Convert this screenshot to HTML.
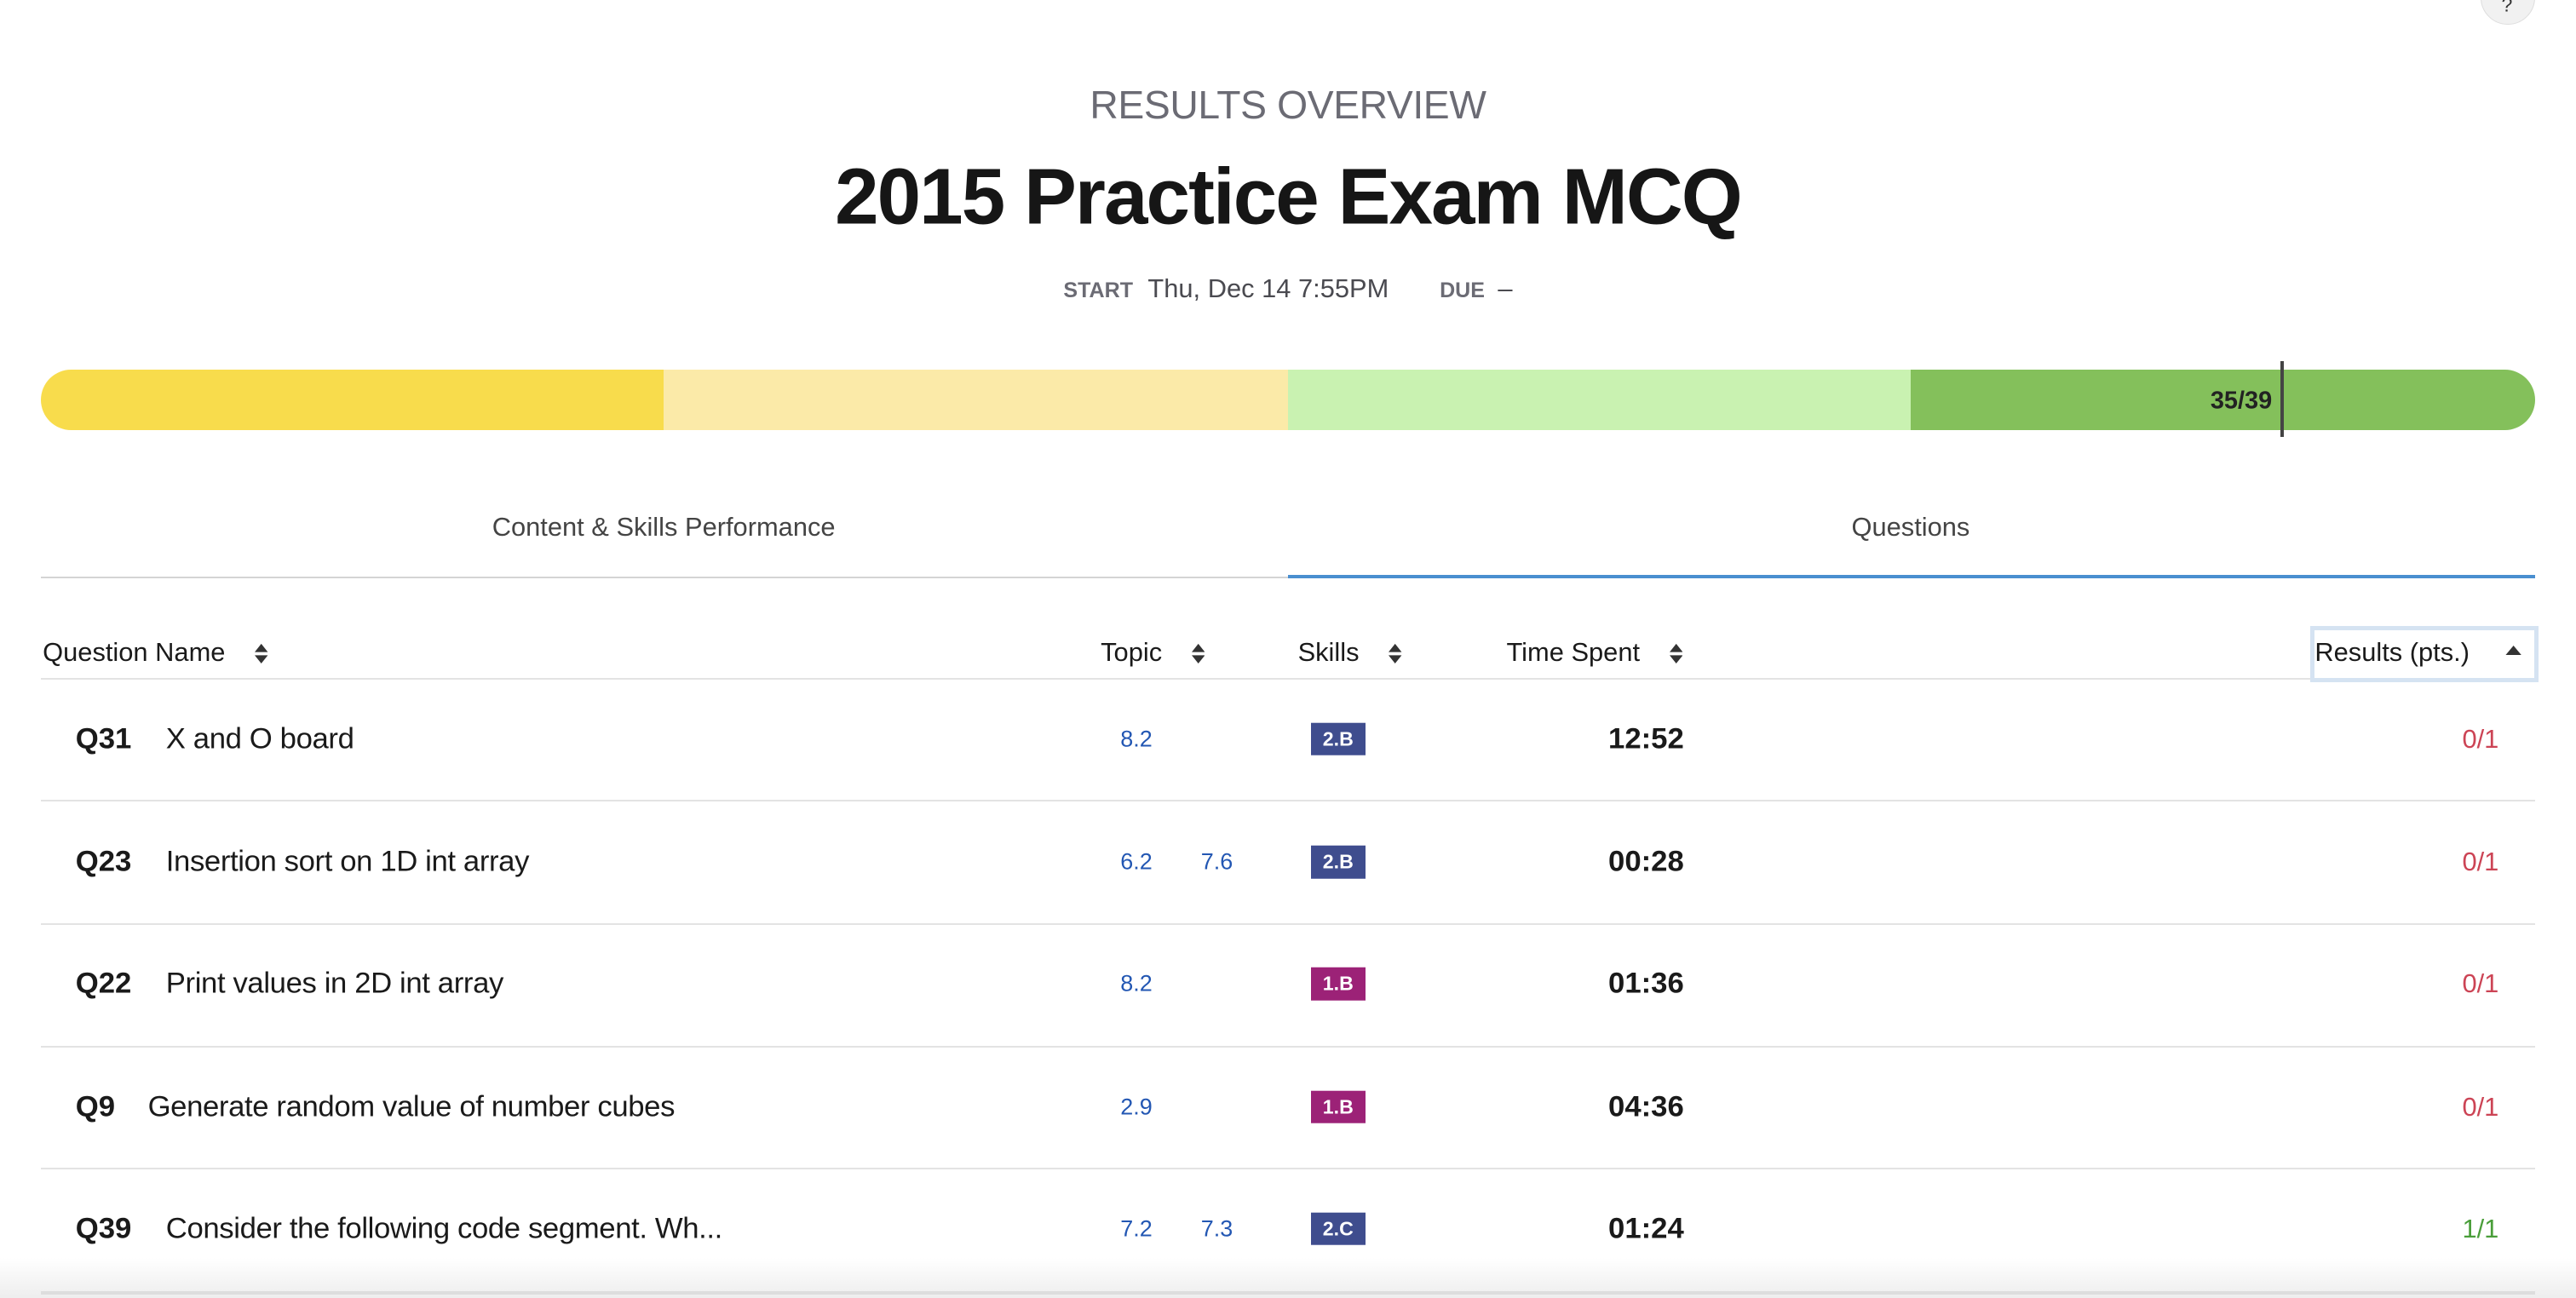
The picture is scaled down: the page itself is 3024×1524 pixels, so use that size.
<!DOCTYPE html>
<html><head><meta charset="utf-8"><style>
html,body{margin:0;padding:0;background:#fff;overflow:hidden}
#w{position:relative;width:1568px;height:790px;zoom:1.92857;font-family:"Liberation Sans",Arial,sans-serif;color:#1a1a1a}
.a{position:absolute;white-space:nowrap}
.c{transform:translate(-50%,-50%)}
.m{transform:translateY(-50%)}
.r{transform:translate(-100%,-50%)}
.sort{display:inline-block;width:8px;height:14px;vertical-align:middle;margin-left:18px}
.q{font-weight:bold;font-size:18px}
.n{font-size:18px;letter-spacing:-0.2px}
.t{font-size:14px;color:#2357b3}
.b{font-size:12px;font-weight:bold;color:#fff;width:33px;height:20px;line-height:20px;text-align:center}
.tm{font-weight:bold;font-size:18px}
.res{font-size:16px}
.hl{position:absolute;left:25px;width:1518px;height:1px;background:#e3e3e3}
</style></head><body><div id="w">
<div class="a" style="left:1510px;top:-18px;width:32px;height:32px;border-radius:50%;background:#f1f1f1;border:1px solid #ddd"></div>
<div class="a c" style="left:1526px;top:3px;font-size:12px;color:#333">?</div>
<div class="a c" style="left:784px;top:64px;font-size:24px;color:#6b6b74;letter-spacing:-0.2px">RESULTS OVERVIEW</div>
<div class="a c" style="left:784px;top:120px;font-size:48px;font-weight:bold;color:#161616;letter-spacing:-1px">2015 Practice Exam MCQ</div>
<div class="a c" style="left:784px;top:176px;font-size:16px;color:#4a4a50"><span style="font-size:13px;font-weight:bold;color:#6b6b74;margin-right:9px">START</span>Thu, Dec 14 7:55PM<span style="font-size:13px;font-weight:bold;color:#6b6b74;margin:0 8px 0 31px">DUE</span>–</div>
<div class="a" style="left:25px;top:225px;width:1518px;height:37px;border-radius:19px;overflow:hidden;display:flex">
<div style="width:379px;background:#f8dc4c"></div><div style="width:380px;background:#fbeaa8"></div><div style="width:379px;background:#c9f2b1"></div><div style="flex:1;background:#84c05b"></div></div>
<div class="a" style="left:1388px;top:220px;width:2px;height:46px;background:#444"></div>
<div class="a r" style="left:1383px;top:244px;font-size:15px;font-weight:bold;color:#222">35/39</div>
<div class="a c" style="left:404px;top:321px;font-size:16px;color:#444">Content &amp; Skills Performance</div>
<div class="a c" style="left:1163px;top:321px;font-size:16px;color:#444">Questions</div>
<div class="a" style="left:25px;top:351px;width:759px;height:1px;background:#d4d4d4"></div>
<div class="a" style="left:784px;top:350px;width:759px;height:2px;background:#4a8fd0"></div>
<svg width="0" height="0" style="position:absolute"><defs><symbol id="s" viewBox="0 0 8 14"><path d="M0 6L4 1L8 6Z M0 8L4 13L8 8Z" fill="#333"/></symbol></defs></svg>
<div class="a m" style="left:26px;top:397px;font-size:16px">Question Name<svg class="sort"><use href="#s"/></svg></div>
<div class="a m" style="left:670px;top:397px;font-size:16px">Topic<svg class="sort"><use href="#s"/></svg></div>
<div class="a m" style="left:790px;top:397px;font-size:16px">Skills<svg class="sort"><use href="#s"/></svg></div>
<div class="a m" style="left:917px;top:397px;font-size:16px">Time Spent<svg class="sort"><use href="#s"/></svg></div>
<div class="hl" style="top:413px"></div>
<div class="a" style="left:1406px;top:381px;width:134px;height:29px;border:3px solid #d5e3f2;background:#fff"></div>
<div class="a m" style="left:1409px;top:397px;font-size:16px">Results (pts.)</div>
<svg class="a" style="left:1525px;top:393px" width="10" height="6"><path d="M0 6L5 0L10 6Z" fill="#333"/></svg>

<div class="a m q" style="left:46px;top:450px">Q31</div><div class="a m n" style="left:101px;top:450px">X and O board</div>
<div class="a m t" style="left:682px;top:450px">8.2</div>
<div class="a m b" style="left:798px;top:450px;background:#3f4d8e">2.B</div>
<div class="a r tm" style="left:1025px;top:450px">12:52</div>
<div class="a r res" style="left:1521px;top:450px;color:#cc4455">0/1</div>
<div class="hl" style="top:487px"></div>

<div class="a m q" style="left:46px;top:525px">Q23</div><div class="a m n" style="left:101px;top:525px">Insertion sort on 1D int array</div>
<div class="a m t" style="left:682px;top:525px">6.2</div><div class="a m t" style="left:731px;top:525px">7.6</div>
<div class="a m b" style="left:798px;top:525px;background:#3f4d8e">2.B</div>
<div class="a r tm" style="left:1025px;top:525px">00:28</div>
<div class="a r res" style="left:1521px;top:525px;color:#cc4455">0/1</div>
<div class="hl" style="top:562px"></div>

<div class="a m q" style="left:46px;top:599px">Q22</div><div class="a m n" style="left:101px;top:599px">Print values in 2D int array</div>
<div class="a m t" style="left:682px;top:599px">8.2</div>
<div class="a m b" style="left:798px;top:599px;background:#9c2277">1.B</div>
<div class="a r tm" style="left:1025px;top:599px">01:36</div>
<div class="a r res" style="left:1521px;top:599px;color:#cc4455">0/1</div>
<div class="hl" style="top:637px"></div>

<div class="a m q" style="left:46px;top:674px">Q9</div><div class="a m n" style="left:90px;top:674px">Generate random value of number cubes</div>
<div class="a m t" style="left:682px;top:674px">2.9</div>
<div class="a m b" style="left:798px;top:674px;background:#9c2277">1.B</div>
<div class="a r tm" style="left:1025px;top:674px">04:36</div>
<div class="a r res" style="left:1521px;top:674px;color:#cc4455">0/1</div>
<div class="hl" style="top:711px"></div>

<div class="a m q" style="left:46px;top:748px">Q39</div><div class="a m n" style="left:101px;top:748px">Consider the following code segment. Wh...</div>
<div class="a m t" style="left:682px;top:748px">7.2</div><div class="a m t" style="left:731px;top:748px">7.3</div>
<div class="a m b" style="left:798px;top:748px;background:#3f4d8e">2.C</div>
<div class="a r tm" style="left:1025px;top:748px">01:24</div>
<div class="a r res" style="left:1521px;top:748px;color:#4a9e3a">1/1</div>
<div class="a" style="left:0;top:766px;width:1568px;height:24px;background:linear-gradient(rgba(255,255,255,0),rgba(230,230,230,0.7))"></div>
<div class="a" style="left:25px;top:786px;width:1518px;height:2px;background:#ddd"></div>
</div></body></html>
